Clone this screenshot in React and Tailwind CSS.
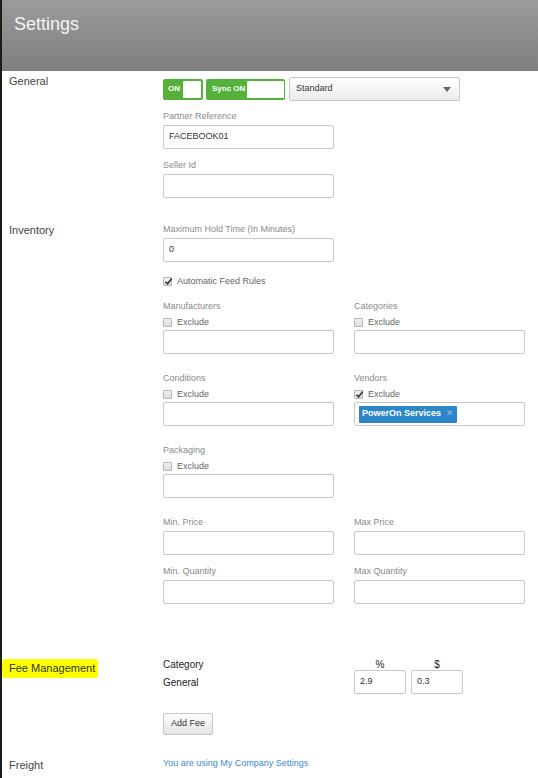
import React from 'react'

const font = "font-['Liberation_Sans',Arial,sans-serif]"

function Check({ checked }) {
  return (
    <span className="relative inline-block h-[9px] w-[9px] shrink-0 rounded-[1px] border border-[#b5b5b5] bg-gradient-to-b from-[#f4f4f4] to-[#dcdcdc]">
      {checked && (
        <svg viewBox="0 0 10 10" className="absolute left-[0px] top-[-1px] h-[9px] w-[9px]">
          <path d="M1.5 5.2 L4 7.6 L8.6 1.6" fill="none" stroke="#333" strokeWidth="1.7" />
        </svg>
      )}
    </span>
  )
}

function Input({ value, className = 'w-[171px]', children }) {
  return (
    <div
      className={`flex h-[24px] items-center rounded-[2px] border border-[#c9c9c9] bg-white pl-[5px] text-[9px] text-[#333] ${className}`}
    >
      {value}
      {children}
    </div>
  )
}

function Label({ children }) {
  return <div className="h-[11px] text-[9px] leading-[11px] text-[#8a8a8a]">{children}</div>
}

function Field({ label, value, className = '' }) {
  return (
    <div className={className}>
      <Label>{label}</Label>
      <div className="mt-[3px]">
        <Input value={value} />
      </div>
    </div>
  )
}

function ExcludeField({ label, checked, className = '', children }) {
  return (
    <div className={className}>
      <Label>{label}</Label>
      <div className="mt-[5px] flex h-[11px] items-center gap-[5px] text-[9px] text-[#666]">
        <Check checked={checked} />
        Exclude
      </div>
      <div className="mt-[2px]">
        <Input>{children}</Input>
      </div>
    </div>
  )
}

function Section({ label, className = '', labelClass = '', children }) {
  return (
    <div className={`flex ${className}`}>
      <div className={`w-[161px] shrink-0 pl-[7px] text-[11px] leading-[13px] text-[#444] ${labelClass}`}>
        {label}
      </div>
      <div className="flex-1">{children}</div>
    </div>
  )
}

export default function App() {
  return (
    <div className={`min-h-[778px] w-full border-l-2 border-[#1c1c1c] bg-white ${font}`}>
      <div className="h-[71px] bg-gradient-to-b from-[#9b9b9b] to-[#7f7f7f] pl-[12px] pt-[13px]">
        <h1 className="text-[18px] leading-[22px] text-[#f4f4f4]">Settings</h1>
      </div>

      <Section label="General" labelClass="pt-[4px]">
        <div className="flex items-center gap-[3px] pt-[6px]">
          <div className="flex h-[21px] w-[40px] items-center justify-between rounded-[2px] bg-[#55b13a] py-[2px] pl-[5px] pr-[2px]">
            <span className="text-[8px] font-bold text-white">ON</span>
            <span className="h-[17px] w-[18px] rounded-[1px] bg-white" />
          </div>
          <div className="flex h-[21px] w-[79px] items-center justify-between rounded-[2px] bg-[#55b13a] py-[2px] pl-[6px] pr-[1px]">
            <span className="text-[8px] font-bold text-white">Sync ON</span>
            <span className="h-[17px] w-[37px] rounded-[1px] bg-white" />
          </div>
          <div className="ml-[1px] flex h-[24px] w-[171px] items-center justify-between rounded-[2px] border border-[#c9c9c9] bg-gradient-to-b from-white to-[#ececec] pl-[6px] pr-[8px] text-[9px] text-[#333]">
            Standard
            <svg viewBox="0 0 8 5" className="h-[5px] w-[8px]">
              <path d="M0 0 H8 L4 5 Z" fill="#666" />
            </svg>
          </div>
        </div>
        <Field label="Partner Reference" value="FACEBOOK01" className="mt-[10px]" />
        <Field label="Seller Id" className="mt-[11px]" />
      </Section>

      <Section label="Inventory" className="mt-[26px]">
        <Field label="Maximum Hold Time (In Minutes)" value="0" />
        <div className="mt-[14px] flex h-[11px] items-center gap-[5px] text-[9px] text-[#666]">
          <Check checked />
          Automatic Feed Rules
        </div>
        <div className="grid w-[362px] grid-cols-[171px_171px] gap-x-[20px]">
          <ExcludeField label="Manufacturers" className="mt-[14px]" />
          <ExcludeField label="Categories" className="mt-[14px]" />
          <ExcludeField label="Conditions" className="mt-[19px]" />
          <ExcludeField label="Vendors" checked className="mt-[19px]">
            <span className="-ml-[1px] flex h-[17px] items-center gap-[5px] rounded-[1px] bg-[#2d86c7] px-[3px] text-[9px] font-bold text-white">
              PowerOn Services
              <span className="text-[9px] font-normal text-[#8cc0e8]">✕</span>
            </span>
          </ExcludeField>
          <ExcludeField label="Packaging" className="col-span-2 mt-[19px]" />
          <Field label="Min. Price" className="mt-[19px]" />
          <Field label="Max Price" className="mt-[19px]" />
          <Field label="Min. Quantity" className="mt-[11px]" />
          <Field label="Max Quantity" className="mt-[11px]" />
        </div>
      </Section>

      <Section
        label={
          <span className="-ml-[7px] inline-block h-[19px] rounded-[2px] bg-[#ffff00] pl-[7px] pr-[3px] leading-[19px] text-[#333]">
            Fee Management
          </span>
        }
        className="mt-[55px]"
      >
        <div className="grid w-[300px] grid-cols-[186px_52px_52px] gap-x-[5px] text-[10px] text-[#222]">
          <div className="h-[11px] leading-[11px]">Category</div>
          <div className="h-[11px] text-center leading-[11px]">%</div>
          <div className="h-[11px] text-center leading-[11px]">$</div>
          <div className="flex h-[24px] items-center">General</div>
          <Input value="2.9" className="w-[52px]" />
          <Input value="0.3" className="w-[52px]" />
        </div>
        <button className="mt-[19px] flex h-[22px] w-[50px] items-center justify-center rounded-[2px] border border-[#c6c6c6] bg-gradient-to-b from-white to-[#e4e4e4] text-[9px] text-[#333]">
          Add Fee
        </button>
      </Section>

      <Section label="Freight" className="mt-[23px]" labelClass="pt-[1px]">
        <a className="block text-[9px] leading-[11px] text-[#3b8ad0]">You are using My Company Settings</a>
      </Section>
    </div>
  )
}
